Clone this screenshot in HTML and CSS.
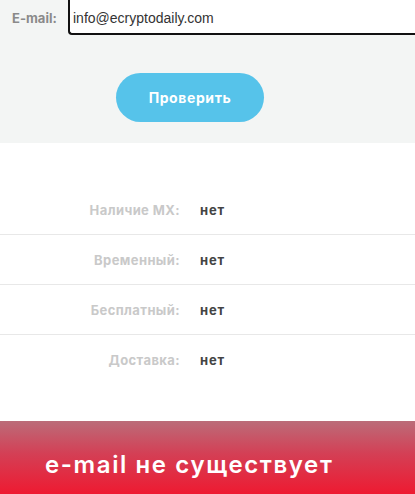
FILE: index.html
```html
<!DOCTYPE html>
<html lang="ru">
<head>
    <meta charset="UTF-8">
    <meta name="viewport" content="width=device-width, initial-scale=1.0">
    <title>Проверка e-mail</title>
    <link rel="stylesheet" href="styles.css">
</head>
<body>
    <section class="check-form">
        <div class="field">
            <label class="field-label" for="email">E-mail:</label>
            <input class="field-input" id="email" type="text" value="info@ecryptodaily.com">
        </div>
        <button class="check-btn" type="button">Проверить</button>
    </section>

    <section class="results">
        <div class="result-row">
            <span class="result-label">Наличие MX:</span>
            <span class="result-value">нет</span>
        </div>
        <div class="result-row">
            <span class="result-label">Временный:</span>
            <span class="result-value">нет</span>
        </div>
        <div class="result-row">
            <span class="result-label">Бесплатный:</span>
            <span class="result-value">нет</span>
        </div>
        <div class="result-row">
            <span class="result-label">Доставка:</span>
            <span class="result-value">нет</span>
        </div>
    </section>

    <div class="verdict">e-mail не существует</div>
</body>
</html>
```

FILE: styles.css
```css
:root {
    --form-bg: #f3f5f4;
    --button-color: #56c3ea;
    --label-color: #c9c9c9;
    --value-color: #444444;
    --line-color: #e8e8e8;
}

body {
    margin: 0;
    font-family: "Open Sans", Arial, sans-serif;
    background-color: #ffffff;
    overflow: hidden;
}

.check-form {
    background-color: var(--form-bg);
    height: 143px;
    display: flex;
    flex-direction: column;
}

.field {
    display: flex;
    align-items: center;
    margin-top: -10px; /* page is scrolled, top of the input is cut */
}

.field-label {
    width: 68px;
    padding-left: 12px;
    box-sizing: border-box;
    font-family: Inter, sans-serif;
    font-weight: 700;
    font-size: 13px;
    color: #8a8a8a;
    padding-top: 10px;
}

.field-input {
    flex: 1;
    height: 45px;
    box-sizing: border-box;
    border: 2px solid #111111;
    border-right: none;
    border-radius: 0 0 0 4px;
    padding: 10px 0 0 3px;
    font-family: "Liberation Sans", Arial, sans-serif;
    font-size: 14px;
    color: #333333;
    background-color: #ffffff;
    outline: none;
}

.check-btn {
    align-self: flex-start;
    margin: 38px 0 0 116px;
    width: 148px;
    height: 49px;
    border: none;
    border-radius: 25px;
    background-color: var(--button-color);
    color: #ffffff;
    font-family: Inter, sans-serif;
    font-weight: 700;
    font-size: 14px;
    letter-spacing: 0.6px;
    cursor: pointer;
}

.results {
    padding-top: 42px;
    height: 278px;
    box-sizing: border-box;
}

.result-row {
    display: flex;
    align-items: center;
    height: 50px;
    box-sizing: border-box;
    border-bottom: 1px solid var(--line-color);
    font-family: Inter, sans-serif;
    font-weight: 700;
    font-size: 13px;
    letter-spacing: 0.4px;
}

.result-row:last-child {
    border-bottom: none;
}

.result-label {
    width: 180px;
    text-align: right;
    color: var(--label-color);
}

.result-value {
    margin-left: 20px;
    color: var(--value-color);
    letter-spacing: 0.8px;
}

.verdict {
    height: 73px;
    display: flex;
    align-items: center;
    padding-left: 45px;
    padding-top: 14px;
    box-sizing: border-box;
    background: linear-gradient(to bottom, #bb6c79 0%, #d43f55 45%, #ee1a31 100%);
    color: #ffffff;
    font-family: Inter, sans-serif;
    font-weight: 600;
    font-size: 24px;
    letter-spacing: 1.6px;
}
```
